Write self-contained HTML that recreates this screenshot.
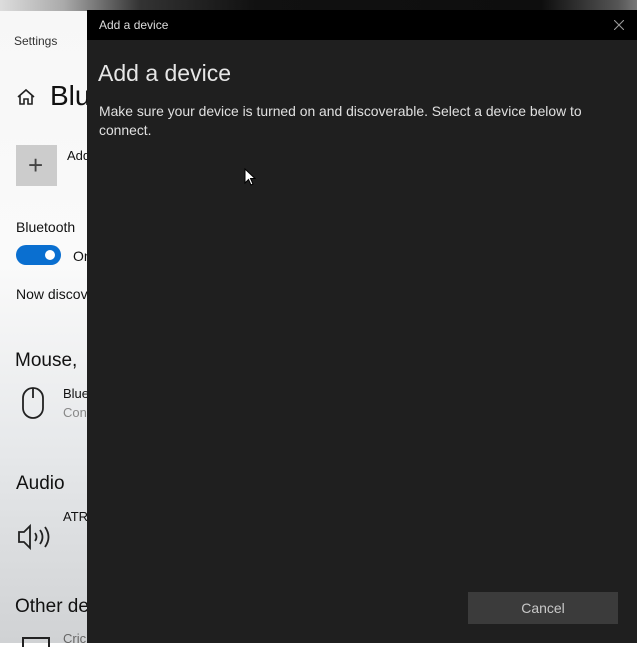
<!DOCTYPE html>
<html><head><meta charset="utf-8"><style>
*{margin:0;padding:0;box-sizing:border-box}
body{width:637px;height:643px;overflow:hidden;position:relative;font-family:"Liberation Sans",sans-serif;background:#fff}
.top{position:absolute;left:0;top:0;width:637px;height:11px;background:linear-gradient(90deg,#ddd 0%,#aaa 10%,#333 22%,#111 40%,#0e0e0e 85%,#555 97%,#777 100%)}
.left{position:absolute;left:0;top:11px;width:87px;height:632px;background:linear-gradient(180deg,#f7f7f7 0%,#fafafa 40%,#e6e8ea 70%,#d0d2d4 100%);color:#111}
.t{position:absolute;white-space:nowrap}
.dlg{position:absolute;left:87px;top:10px;width:550px;height:633px;background:#1f1f1f}
.bar{position:absolute;left:0;top:0;width:550px;height:30px;background:#000;color:#ddd;font-size:12px}
.btn{position:absolute;left:381px;top:582px;width:150px;height:32px;background:#3b3b3b;color:#c8c8c8;font-size:14px;text-align:center;line-height:32px}
</style></head><body>
<div class="top"></div>
<div class="left">
<div class="t" style="left:14px;top:23px;font-size:12px;color:#333">Settings</div>
<svg style="position:absolute;left:16px;top:76px" width="20" height="20" viewBox="0 0 20 20"><path d="M2 10 L10 3 L18 10 M4 8 V17 H8 V12 H12 V17 H16 V8" fill="none" stroke="#222" stroke-width="1.6"/></svg>
<div class="t" style="left:50px;top:69px;font-size:28px;color:#111">Blu</div>
<div style="position:absolute;left:16px;top:134px;width:41px;height:41px;background:#ccc"></div>
<div class="t" style="left:28px;top:139px;font-size:26px;font-weight:300;color:#444">+</div>
<div class="t" style="left:67px;top:137px;font-size:13px">Add</div>
<div class="t" style="left:16px;top:208px;font-size:14px">Bluetooth</div>
<div style="position:absolute;left:16px;top:234px;width:45px;height:20px;border-radius:10px;background:#0a6fd0"></div>
<div style="position:absolute;left:45px;top:239px;width:10px;height:10px;border-radius:5px;background:#fff"></div>
<div class="t" style="left:73px;top:237px;font-size:14px">On</div>
<div class="t" style="left:16px;top:275px;font-size:14px">Now discov</div>
<div class="t" style="left:15px;top:339px;font-size:19px">Mouse,</div>
<svg style="position:absolute;left:21px;top:375px" width="24" height="34" viewBox="0 0 24 34"><rect x="2" y="2" width="20" height="30" rx="10" fill="none" stroke="#222" stroke-width="1.8"/><path d="M12 2V12" stroke="#222" stroke-width="1.8"/></svg>
<div class="t" style="left:63px;top:375px;font-size:13px">Blue</div>
<div class="t" style="left:63px;top:394px;font-size:13px;color:#888">Con</div>
<div class="t" style="left:16px;top:462px;font-size:19px">Audio</div>
<svg style="position:absolute;left:17px;top:510px" width="36" height="32" viewBox="0 0 36 32"><path d="M2 11H7L13 5V27L7 21H2Z" fill="none" stroke="#222" stroke-width="1.8"/><path d="M18 12Q21 16 18 20M23 9Q28 16 23 23M28 6Q35 16 28 26" fill="none" stroke="#222" stroke-width="1.8"/></svg>
<div class="t" style="left:63px;top:498px;font-size:13px">ATR</div>
<div class="t" style="left:15px;top:585px;font-size:19px">Other de</div>
<div style="position:absolute;left:22px;top:626px;width:28px;height:10px;border:2px solid #222;border-bottom:none"></div>
<div class="t" style="left:63px;top:620px;font-size:13px;color:#666">Cric</div>
</div>
<div class="dlg">
<div class="bar"><div class="t" style="left:12px;top:8px">Add a device</div>
<svg style="position:absolute;left:527px;top:10px" width="10" height="10" viewBox="0 0 10 10"><path d="M0 0L10 10M10 0L0 10" stroke="#999" stroke-width="1.1"/></svg></div>
<div class="t" style="left:11px;top:50px;font-size:23px;color:#e6e6e6">Add a device</div>
<div class="t" style="left:12px;top:92px;font-size:13.9px;line-height:19px;color:#e0e0e0;white-space:normal;width:520px">Make sure your device is turned on and discoverable. Select a device below to connect.</div>
<svg style="position:absolute;left:157px;top:158px" width="12" height="18" viewBox="0 0 12 18"><path d="M1 1V15L4.5 11.5L7 17L9 16L6.5 10.5H11Z" fill="#fff" stroke="#000" stroke-width="1"/></svg>
<div class="btn">Cancel</div>
</div>
</body></html>
